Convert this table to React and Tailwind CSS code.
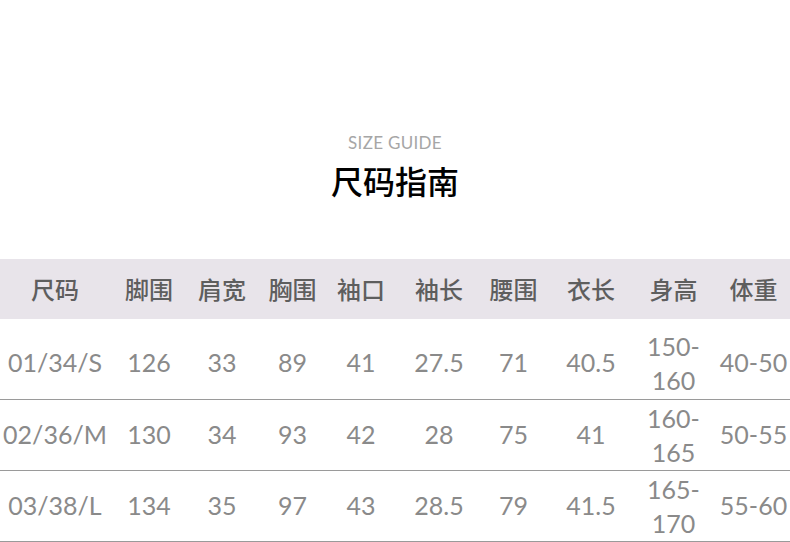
import React from "react";

const headers = ["尺码", "脚围", "肩宽", "胸围", "袖口", "袖长", "腰围", "衣长", "身高", "体重"];
const rows = [
  { cells: ["01/34/S", "126", "33", "89", "41", "27.5", "71", "40.5", ["150-", "160"], "40-50"], first: true },
  { cells: ["02/36/M", "130", "34", "93", "42", "28", "75", "41", ["160-", "165"], "50-55"] },
  { cells: ["03/38/L", "134", "35", "97", "43", "28.5", "79", "41.5", ["165-", "170"], "55-60"] },
];

const gridCls = "grid grid-cols-[110px_78px_68px_73px_64px_92px_57px_98px_67px_93px] w-[800px]";

export default function App() {
  return (
    <div className="w-[790px] h-[542px] overflow-hidden bg-white" style={{ fontFamily: "Lato, 'Noto Sans CJK SC', sans-serif" }}>
      <div className="pt-[134px] flex flex-col items-center">
        <div className="text-[17px] leading-[18px] font-normal text-[#a6a6a6] tracking-[0.3px]" style={{ fontFamily: "Lato, sans-serif" }}>SIZE GUIDE</div>
        <div className="mt-[8px] text-[32px] leading-[40px] font-medium text-black" style={{ fontFamily: "'Noto Sans CJK SC', sans-serif" }}>尺码指南</div>
      </div>
      <div className="mt-[59px]">
        <div className={gridCls + " h-[60px] bg-[#e8e4ea] items-center"}>
          {headers.map((h, i) => (
            <div key={i} className="text-center text-[24px] font-medium text-[#5e5e5e]" style={{ fontFamily: "'Noto Sans CJK SC', sans-serif" }}>{h}</div>
          ))}
        </div>
        {rows.map((r, ri) => (
          <div key={ri} className={gridCls + (r.first ? " h-[81px] pt-[8px]" : " h-[71px]") + " items-center border-b border-[#9a9a9a]"}>
            {r.cells.map((c, ci) => (
              <div key={ci} className="text-center text-[25px] text-[#8a8a8a] whitespace-nowrap">
                {Array.isArray(c) ? (
                  <div className="leading-[34px]">
                    <div>{c[0]}</div>
                    <div>{c[1]}</div>
                  </div>
                ) : (
                  c
                )}
              </div>
            ))}
          </div>
        ))}
      </div>
    </div>
  );
}
